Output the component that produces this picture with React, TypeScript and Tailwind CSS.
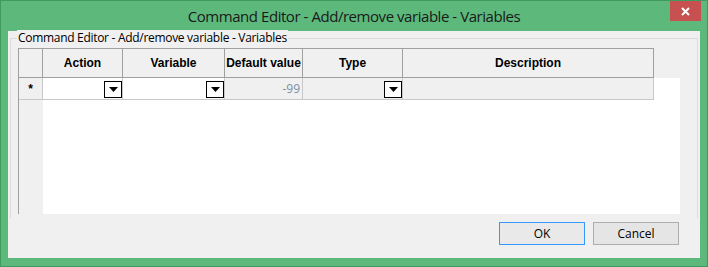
import React from 'react';

const DropBtn = () => (
    <div className="w-[18px] h-[17px] border border-black bg-white flex items-center justify-center shrink-0">
        <svg width="9" height="5" viewBox="0 0 9 5">
            <path d="M0 0 H9 L4.5 5 Z" fill="#000" />
        </svg>
    </div>
);

const columns = [
    { label: 'Action', w: 'w-[80px]' },
    { label: 'Variable', w: 'w-[102px]' },
    { label: 'Default value', w: 'w-[78px]' },
    { label: 'Type', w: 'w-[100px]' },
    { label: 'Description', w: 'w-[251px]' },
];

export default function App() {
    return (
        <div className="w-[708px] h-[267px] bg-[#5cb97b] border border-[#3f9a5e] flex flex-col font-['Open_Sans',sans-serif]">
            {/* Title bar */}
            <div className="relative h-[30px] shrink-0 flex items-center justify-center">
                <span className="text-[15px] text-[#1a1a1a] tracking-[-0.45px]">Command Editor - Add/remove variable - Variables</span>
                <div className="absolute right-[6px] top-0 w-[31px] h-[20px] bg-[#c75050] flex items-center justify-center">
                    <svg width="9" height="9" viewBox="0 0 9 9">
                        <path d="M1 1 L8 8 M8 1 L1 8" stroke="#fff" strokeWidth="2" />
                    </svg>
                </div>
            </div>

            {/* Client area */}
            <div className="mx-[7px] h-[227px] bg-[#f0f0f0] flex flex-col">
                {/* Group box */}
                <div className="mt-[7px] mx-[2px] h-[180px] border-t border-l border-r border-[#dcdcdc] relative flex flex-col">
                    <span className="absolute -top-[9px] left-[6px] px-[1px] bg-[#f0f0f0] text-[12px] leading-[16px] text-black tracking-[-0.3px]">
                        Command Editor - Add/remove variable - Variables
                    </span>

                    {/* Grid */}
                    <div className="mt-[9px] ml-[7px] w-[662px] h-[166px] bg-white border-l border-[#a0a0a0] flex flex-col font-['Liberation_Sans',sans-serif]">
                        {/* Header row */}
                        <div className="h-[30px] flex bg-[#f0f0f0]">
                            <div className="w-[24px] border-t border-r border-b border-[#a0a0a0]" />
                            {columns.map((c) => (
                                <div key={c.label} className={`${c.w} border-t border-r border-b border-[#a0a0a0] flex items-center justify-center text-[12px] font-bold text-black whitespace-nowrap`}>
                                    {c.label}
                                </div>
                            ))}
                            <div className="flex-1" />
                        </div>
                        {/* Data row */}
                        <div className="h-[22px] flex">
                            <div className="w-[24px] bg-[#f0f0f0] border-r border-b border-[#c8c8c8] flex items-center justify-center text-[12px] font-bold text-black pt-[1px]">*</div>
                            <div className="w-[80px] bg-white border-r border-b border-[#c8c8c8] flex items-start justify-end pt-[3px]">
                                <DropBtn />
                            </div>
                            <div className="w-[102px] bg-white border-r border-b border-[#c8c8c8] flex items-start justify-end pt-[3px]">
                                <DropBtn />
                            </div>
                            <div className="w-[78px] bg-[#f0f0f0] border-r border-b border-[#c8c8c8] flex items-center justify-end pr-[2px] text-[12px] text-[#7b8ea6] font-['Open_Sans',sans-serif]">
                                -99
                            </div>
                            <div className="w-[100px] bg-[#f0f0f0] border-r border-b border-[#c8c8c8] flex items-start justify-end pt-[3px]">
                                <DropBtn />
                            </div>
                            <div className="w-[251px] bg-[#f0f0f0] border-r border-b border-[#c8c8c8]" />
                            <div className="flex-1 bg-white" />
                        </div>
                        {/* Remaining area */}
                        <div className="flex-1 flex">
                            <div className="w-[24px] bg-[#f0f0f0]" />
                            <div className="flex-1 bg-white" />
                        </div>
                    </div>
                </div>

                {/* Buttons */}
                <div className="mt-[4px] flex justify-end gap-[8px] pr-[21px]">
                    <button className="w-[86px] h-[23px] border border-[#3399ff] bg-[#e9e9e9] text-[12px] text-black">OK</button>
                    <button className="w-[86px] h-[23px] border border-[#adadad] bg-[#e5e5e5] text-[12px] text-black">Cancel</button>
                </div>
            </div>
        </div>
    );
}
